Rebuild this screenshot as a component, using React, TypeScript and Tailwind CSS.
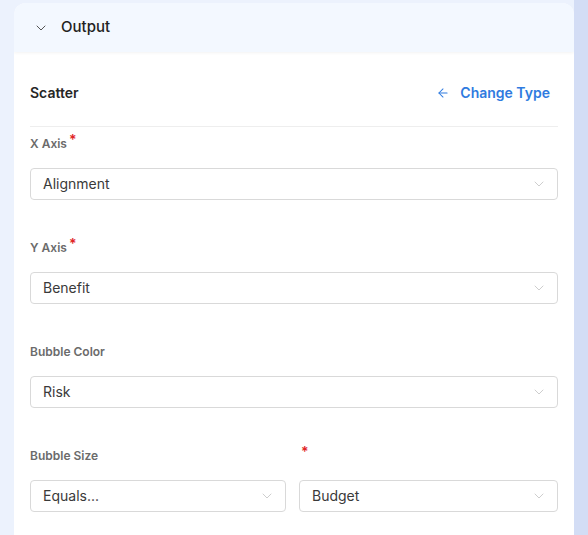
import { ChevronDown, ArrowLeft } from "lucide-react";

function Select({ value }: { value: string }) {
	return (
		<div className="flex h-8 items-center justify-between rounded border border-[#d9d9d9] bg-white pl-3 pr-2.5">
			<span className="text-sm text-[#3a3a3a]">{value}</span>
			<ChevronDown className="h-4 w-4 text-[#c4c4c4]" strokeWidth={1.25} />
		</div>
	);
}

function Label({ text, required }: { text: string; required?: boolean }) {
	return (
		<div className="flex h-4 items-start text-xs font-semibold leading-4 text-[#6b6b6b]">
			{text}
			{required && <span className="ml-0.5 -mt-1 text-sm leading-4 text-[#e02424]">*</span>}
		</div>
	);
}

function Field({ label, value, required }: { label: string; value: string; required?: boolean }) {
	return (
		<div className="flex flex-col gap-4">
			<Label text={label} required={required} />
			<Select value={value} />
		</div>
	);
}

export default function App() {
	return (
		<div className="flex min-h-[535px] w-[588px] bg-[#ecf2fd] font-['Inter',sans-serif]">
			<div className="ml-[14px] mt-[3px] flex w-[560px] flex-col overflow-hidden rounded-t-xl bg-white">
				{/* Header */}
				<div className="flex h-[49px] items-center gap-3 bg-[#f3f8ff] pl-[19px] shadow-[0_1px_3px_rgba(0,0,0,0.05)]">
					<ChevronDown className="h-4 w-4 text-[#555]" strokeWidth={1.5} />
					<span className="text-[15px] font-medium text-[#222]">Output</span>
				</div>

				{/* Body */}
				<div className="flex flex-col px-4">
					<div className="mt-6 box-content flex h-[34px] items-center justify-between border-b border-[#eee] pb-4 pr-2">
						<span className="text-sm font-semibold text-[#262626]">Scatter</span>
						<button className="flex items-center gap-2.5 text-sm font-semibold text-[#2f7be0]">
							<ArrowLeft className="h-3.5 w-3.5" strokeWidth={1.75} />
							Change Type
						</button>
					</div>
					<div className="mt-[9px] flex flex-col gap-10">
						<Field label="X Axis" value="Alignment" required />
						<Field label="Y Axis" value="Benefit" required />
						<Field label="Bubble Color" value="Risk" />
						<div className="grid grid-cols-[256px_1fr] gap-x-[13px] gap-y-4">
							<Label text="Bubble Size" />
							<Label text="" required />
							<Select value="Equals..." />
							<Select value="Budget" />
						</div>
					</div>
				</div>
			</div>
			<div className="flex-1 bg-[#d3ddf5]" />
		</div>
	);
}
